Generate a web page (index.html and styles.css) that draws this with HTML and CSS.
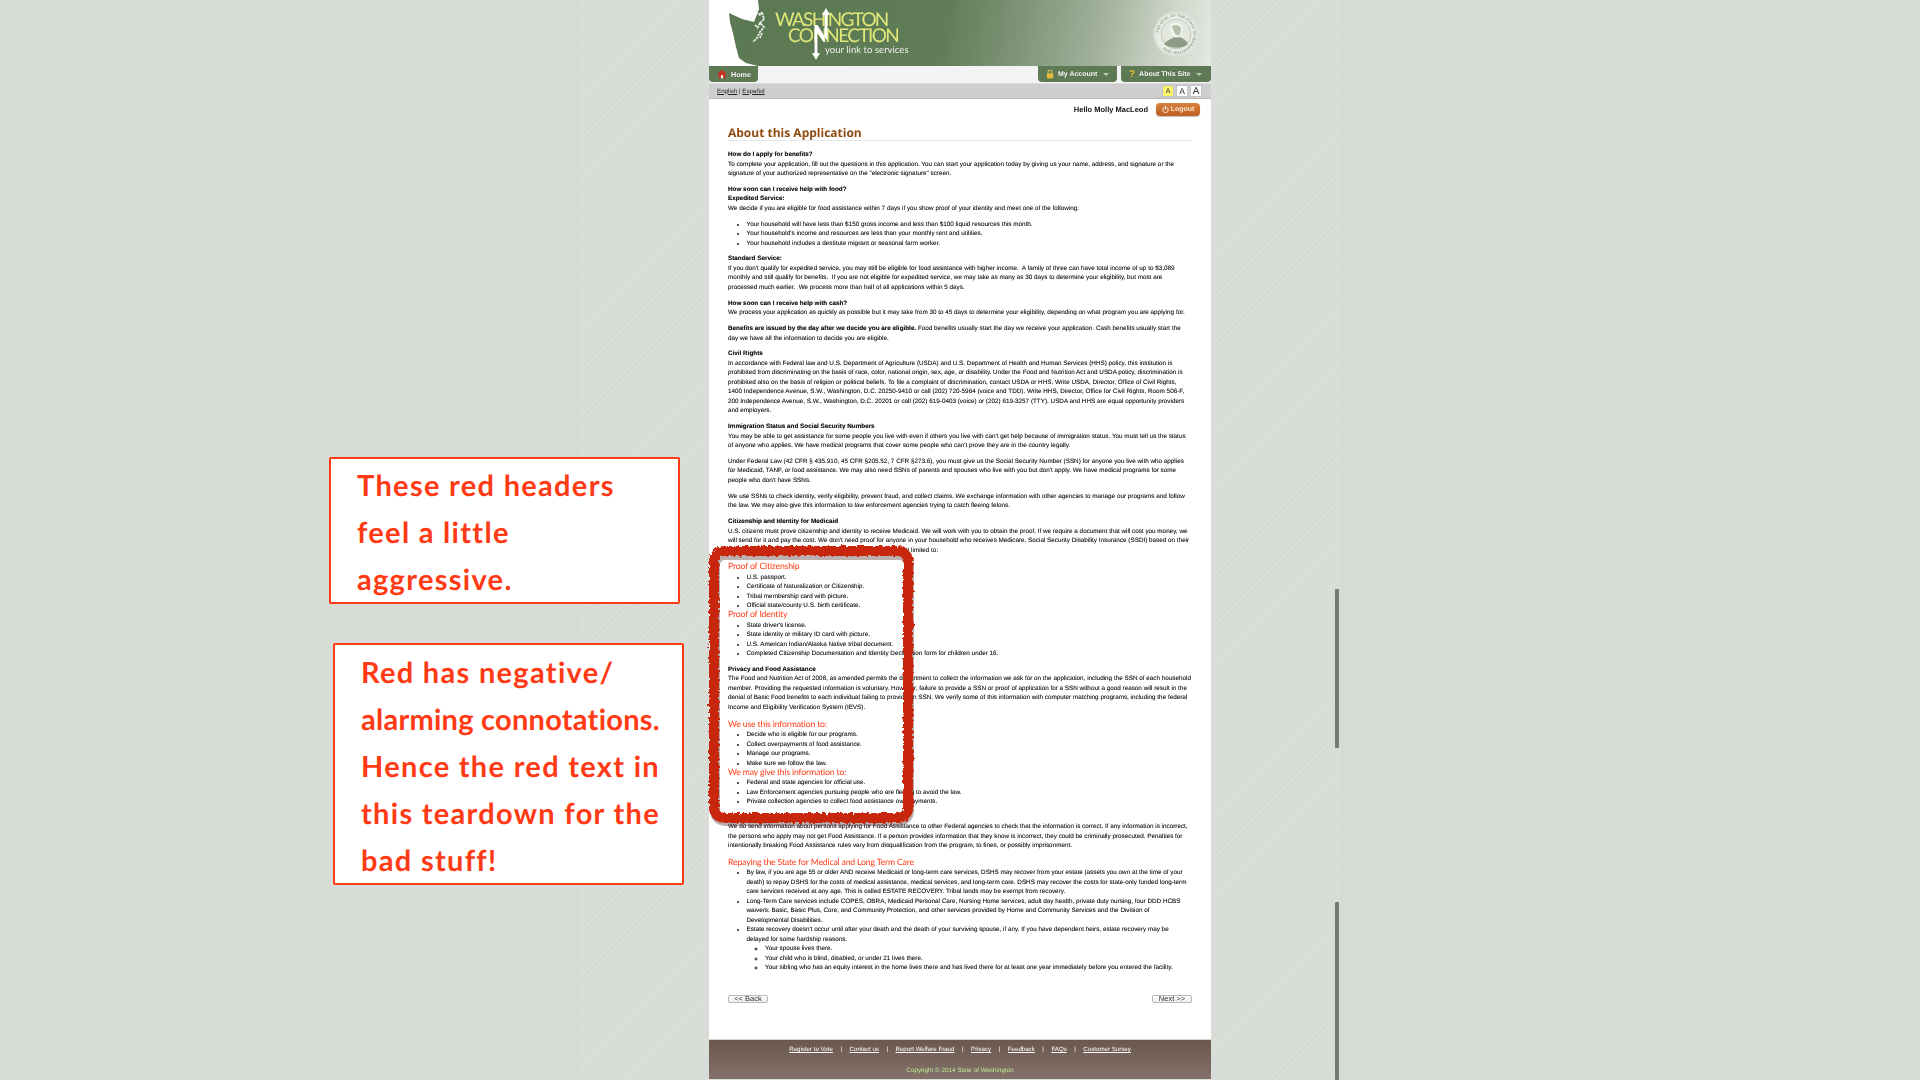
FILE: index.html
```html
<!DOCTYPE html>
<html lang="en">
  <head>
    <meta charset="UTF-8" />
    <meta name="viewport" content="width=device-width, initial-scale=1.0" />
    <title>Washington Connection - About this Application</title>
    <link rel="stylesheet" href="styles.css">
  </head>
  <body>
    <div class="backdrop">
      <div class="page">
        <header class="masthead">
          <svg class="state-map" viewBox="0 0 60 66" width="60" height="66">
            <path d="M0 0H49L50 9L47 17L45 22L33 19L20 13L21 22L24 33L27 47L30 58L37 63L49 66H0Z" fill="#fff" />
            <path d="M47 11L51 15L53 12L55 19L51 23L55 27L51 32L48 38L44 42M51 23L48 29M53 33L51 38M46 25L49 28" fill="none" stroke="#eef1ea" stroke-width="1.7" stroke-dasharray="2.5 .8" />
          </svg>
          <div class="logo">
            <span class="logo-top">WASHINGTON</span>
            <span class="logo-bottom">CONNECTION</span>
            <span class="logo-tag">your link to services</span>
          </div>
          <svg class="logo-arrow" viewBox="0 0 22 52" width="22" height="52">
            <path d="M5 17H7.6L17.4 33V7H20L16 0L12 7H14.6V34H13.6L7.4 24V45H10L6 52L2 45H4.6V17Z" fill="#fff" />
          </svg>
          <svg class="seal" viewBox="0 0 48 48" width="48" height="48">
            <defs>
              <path id="sealRing" d="M24 24m-17.4 0a17.4 17.4 0 1 1 34.8 0a17.4 17.4 0 1 1 -34.8 0" />
            </defs>
            <circle cx="24" cy="24" r="22.5" fill="#e9ece6" />
            <circle cx="24" cy="24" r="21.3" fill="none" stroke="#c3cdbd" stroke-width="0.6" />
            <text class="seal-text"><textPath href="#sealRing" startOffset="1%">THE SEAL OF THE STATE OF WASHINGTON 1889</textPath></text>
            <circle cx="24" cy="24" r="14.8" fill="#e3e7de" stroke="#b3bfab" stroke-width="0.7" />
            <path d="M12 34C15 30 20 29 22 27L27 27C31 28 35 31 36 34C31 39 18 39 12 34Z" fill="#8d9d85" />
            <path d="M18 18C18 12 28 11 30 16C31 20 30 24 28 26C26 28 23 28 21 26C19 24 18 21 18 18Z" fill="#f3f5f0" />
            <path d="M20 16C23 14 27 15 29 18C29 22 28 25 26 26C24 24 22 24 22 21C21 20 20 18 20 16Z" fill="#b4c0ac" />
          </svg>
        </header>

        <nav class="main-nav">
          <a class="nav-tab nav-home">
            <svg class="nav-icon" viewBox="0 0 12 12" width="10" height="10">
              <path d="M6 1L12 6.5H10V11H7.2V7.6H4.8V11H2V6.5H0Z" fill="#c9301f" />
              <path d="M4.8 7.6H7.2V11H4.8Z" fill="#fff" />
            </svg>
            Home
          </a>
          <div class="nav-spacer"></div>
          <a class="nav-tab nav-account">
            <svg class="nav-icon" viewBox="0 0 10 12" width="8" height="10">
              <path d="M2.5 5V3.4C2.5 .6 7.5 .6 7.5 3.4V5" fill="none" stroke="#e3c25a" stroke-width="1.3" />
              <rect x="1" y="5" width="8" height="6.5" rx="1" fill="#e8b93c" />
            </svg>
            My Account
            <span class="caret"></span>
          </a>
          <a class="nav-tab nav-about">
            <span class="nav-help">?</span>
            About This Site
            <span class="caret"></span>
          </a>
        </nav>

        <div class="lang-bar">
          <div class="lang-links"><a>English</a> | <a>Español</a></div>
          <div class="text-sizes">
            <span class="size-btn size-small active">A</span>
            <span class="size-btn size-medium">A</span>
            <span class="size-btn size-large">A</span>
          </div>
        </div>

        <div class="user-row">
          <span class="hello">Hello Molly MacLeod</span>
          <a class="logout-btn">
            <svg viewBox="0 0 10 10" width="7" height="7">
              <path d="M3 2.2A3.9 3.9 0 1 0 7 2.2M5 .6V4.6" fill="none" stroke="#fff" stroke-width="1.4" stroke-linecap="round" />
            </svg>
            Logout
          </a>
        </div>

        <main class="content">
          <h1>About this Application</h1>

          <p><b>How do I apply for benefits?</b><br />
          To complete your application, fill out the questions in this application. You can start your application today by giving us your name, address, and signature or the<br />
          signature of your authorized representative on the "electronic signature" screen.</p>

          <p><b>How soon can I receive help with food?</b><br />
          <b>Expedited Service:</b><br />
          We decide if you are eligible for food assistance within 7 days if you show proof of your identity and meet one of the following:</p>
          <ul class="spaced">
            <li>Your household will have less than $150 gross income and less than $100 liquid resources this month.</li>
            <li>Your household's income and resources are less than your monthly rent and utilities.</li>
            <li>Your household includes a destitute migrant or seasonal farm worker.</li>
          </ul>

          <p><b>Standard Service:</b><br />
          If you don't qualify for expedited service, you may still be eligible for food assistance with higher income.&nbsp; A family of three can have total income of up to $3,089<br />
          monthly and still qualify for benefits.&nbsp; If you are not eligible for expedited service, we may take as many as 30 days to determine your eligibility, but most are<br />
          processed much earlier.&nbsp; We process more than half of all applications within 5 days.</p>

          <p><b>How soon can I receive help with cash?</b><br />
          We process your application as quickly as possible but it may take from 30 to 45 days to determine your eligibility, depending on what program you are applying for.</p>

          <p><b>Benefits are issued by the day after we decide you are eligible.</b> Food benefits usually start the day we receive your application. Cash benefits usually start the<br />
          day we have all the information to decide you are eligible.</p>

          <p><b>Civil Rights</b><br />
          In accordance with Federal law and U.S. Department of Agriculture (USDA) and U.S. Department of Health and Human Services (HHS) policy, this institution is<br />
          prohibited from discriminating on the basis of race, color, national origin, sex, age, or disability. Under the Food and Nutrition Act and USDA policy, discrimination is<br />
          prohibited also on the basis of religion or political beliefs. To file a complaint of discrimination, contact USDA or HHS. Write USDA, Director, Office of Civil Rights,<br />
          1400 Independence Avenue, S.W., Washington, D.C. 20250-9410 or call (202) 720-5964 (voice and TDD). Write HHS, Director, Office for Civil Rights, Room 506-F,<br />
          200 Independence Avenue, S.W., Washington, D.C. 20201 or call (202) 619-0403 (voice) or (202) 619-3257 (TTY). USDA and HHS are equal opportunity providers<br />
          and employers.</p>

          <p><b>Immigration Status and Social Security Numbers</b><br />
          You may be able to get assistance for some people you live with even if others you live with can't get help because of immigration status. You must tell us the status<br />
          of anyone who applies. We have medical programs that cover some people who can't prove they are in the country legally.</p>

          <p>Under Federal Law (42 CFR § 435.910, 45 CFR §205.52, 7 CFR §273.6), you must give us the Social Security Number (SSN) for anyone you live with who applies<br />
          for Medicaid, TANF, or food assistance. We may also need SSNs of parents and spouses who live with you but don't apply. We have medical programs for some<br />
          people who don't have SSNs.</p>

          <p>We use SSNs to check identity, verify eligibility, prevent fraud, and collect claims. We exchange information with other agencies to manage our programs and follow<br />
          the law. We may also give this information to law enforcement agencies trying to catch fleeing felons.</p>

          <p><b>Citizenship and Identity for Medicaid</b><br />
          U.S. citizens must prove citizenship and identity to receive Medicaid. We will work with you to obtain the proof. If we require a document that will cost you money, we<br />
          will send for it and pay the cost. We don't need proof for anyone in your household who receives Medicare, Social Security Disability Insurance (SSDI) based on their<br />
          disability or age. Acceptable proof of citizenship includes but isn't limited to:</p>

          <h2 class="red-first">Proof of Citizenship</h2>
          <ul>
            <li>U.S. passport.</li>
            <li>Certificate of Naturalization or Citizenship.</li>
            <li>Tribal membership card with picture.</li>
            <li>Official state/county U.S. birth certificate.</li>
          </ul>
          <h2>Proof of Identity</h2>
          <ul class="spaced">
            <li>State driver's license.</li>
            <li>State identity or military ID card with picture.</li>
            <li>U.S. American Indian/Alaska Native tribal document.</li>
            <li>Completed Citizenship Documentation and Identity Declaration form for children under 16.</li>
          </ul>

          <p><b>Privacy and Food Assistance</b><br />
          The Food and Nutrition Act of 2008, as amended permits the department to collect the information we ask for on the application, including the SSN of each household<br />
          member. Providing the requested information is voluntary. However, failure to provide a SSN or proof of application for a SSN without a good reason will result in the<br />
          denial of Basic Food benefits to each individual failing to provide an SSN. We verify some of this information with computer matching programs, including the federal<br />
          Income and Eligibility Verification System (IEVS).</p>

          <h2 class="red-first">We use this information to:</h2>
          <ul>
            <li>Decide who is eligible for our programs.</li>
            <li>Collect overpayments of food assistance.</li>
            <li>Manage our programs.</li>
            <li>Make sure we follow the law.</li>
          </ul>
          <h2>We may give this information to:</h2>
          <ul class="spaced wide-gap">
            <li>Federal and state agencies for official use.</li>
            <li>Law Enforcement agencies pursuing people who are fleeing to avoid the law.</li>
            <li>Private collection agencies to collect food assistance overpayments.</li>
          </ul>

          <p>We do send information about persons applying for Food Assistance to other Federal agencies to check that the information is correct. If any information is incorrect,<br />
          the persons who apply may not get Food Assistance. If a person provides information that they know is incorrect, they could be criminally prosecuted. Penalties for<br />
          intentionally breaking Food Assistance rules vary from disqualification from the program, to fines, or possibly imprisonment.</p>

          <h2 class="red-first">Repaying the State for Medical and Long Term Care</h2>
          <ul>
            <li>By law, if you are age 55 or older AND receive Medicaid or long-term care services, DSHS may recover from your estate (assets you own at the time of your<br />
            death) to repay DSHS for the costs of medical assistance, medical services, and long-term care. DSHS may recover the costs for state-only funded long-term<br />
            care services received at any age. This is called ESTATE RECOVERY. Tribal lands may be exempt from recovery.</li>
            <li>Long-Term Care services include COPES, OBRA, Medicaid Personal Care, Nursing Home services, adult day health, private duty nursing, four DDD HCBS<br />
            waivers: Basic, Basic Plus, Core, and Community Protection, and other services provided by Home and Community Services and the Division of<br />
            Developmental Disabilities.</li>
            <li>Estate recovery doesn't occur until after your death and the death of your surviving spouse, if any. If you have dependent heirs, estate recovery may be<br />
            delayed for some hardship reasons.
              <ul>
                <li>Your spouse lives there.</li>
                <li>Your child who is blind, disabled, or under 21 lives there.</li>
                <li>Your sibling who has an equity interest in the home lives there and has lived there for at least one year immediately before you entered the facility.</li>
              </ul>
            </li>
          </ul>

          <div class="pager">
            <button class="pager-btn">&lt;&lt; Back</button>
            <button class="pager-btn">Next &gt;&gt;</button>
          </div>
        </main>

        <footer class="site-footer">
          <div class="footer-links">
            <a>Register to Vote</a><span>|</span>
            <a>Contact us</a><span>|</span>
            <a>Report Welfare Fraud</a><span>|</span>
            <a>Privacy</a><span>|</span>
            <a>Feedback</a><span>|</span>
            <a>FAQs</a><span>|</span>
            <a>Customer Survey</a>
          </div>
          <div class="copyright">Copyright © 2014 State of Washington</div>
        </footer>
      </div>
    </div>

    <svg class="red-frame" viewBox="0 0 212 284" width="212" height="284">
      <defs>
        <filter id="rough" x="-5%" y="-5%" width="110%" height="110%">
          <feTurbulence type="fractalNoise" baseFrequency="0.3" numOctaves="2" seed="4" />
          <feDisplacementMap in="SourceGraphic" scale="5" />
        </filter>
      </defs>
      <rect class="frame-shadow" x="9" y="11" width="194" height="266" rx="10" />
      <rect class="frame-line" x="8" y="7" width="194" height="267" rx="10" filter="url(#rough)" />
    </svg>

    <div class="note note-first">These red headers<br />feel a little<br />aggressive.</div>
    <div class="note note-second">Red has negative/<br /><span class="tight">alarming connotations.</span><br />Hence the red text in<br />this teardown for the<br />bad stuff!</div>

    <div class="scroll-mark scroll-upper"></div>
    <div class="scroll-mark scroll-lower"></div>
  </body>
</html>
```

FILE: styles.css
```css
* {
  margin: 0;
  padding: 0;
  box-sizing: border-box;
}

body {
  position: relative;
  width: 1920px;
  height: 1080px;
  overflow: hidden;
  background: #d6dbd5;
  font-family: "Liberation Sans", Arial, sans-serif;
  text-rendering: geometricPrecision;
}

.backdrop {
  width: 760px;
  height: 1080px;
  margin: 0 auto;
  background: repeating-linear-gradient(
    135deg,
    #d6dbd5 0,
    #d6dbd5 2px,
    #dadfd9 2px,
    #dadfd9 4px
  );
}

.page {
  display: flex;
  flex-direction: column;
  width: 502px;
  height: 1079px;
  margin: 0 auto;
  background: white;
  filter: blur(0.35px);
}

/* header */
.masthead {
  position: relative;
  flex: none;
  height: 66px;
  background: linear-gradient(
    100deg,
    #5a7852 0%,
    #5f7c56 46%,
    #7f9578 62%,
    #a1b19a 77%,
    #cfd6ca 91%,
    #e4e8e1 100%
  );
}

.state-map {
  position: absolute;
  left: 0;
  top: 0;
}

.logo {
  position: absolute;
  left: 66px;
  top: 12px;
  color: #dfe877;
  font-family: Lato, sans-serif;
  font-weight: 400;
}

.logo span {
  display: block;
  white-space: nowrap;
}

.logo-top {
  font-size: 19px;
  line-height: 16px;
  letter-spacing: -1.8px;
}

.logo-bottom {
  font-size: 19px;
  line-height: 16px;
  letter-spacing: -1.6px;
  margin-left: 13px;
}

.logo-tag {
  margin-left: 50px;
  margin-top: 1px;
  font-size: 9.6px;
  line-height: 12px;
  color: #eef1e8;
}

.logo-arrow {
  position: absolute;
  left: 101px;
  top: 8px;
}

.seal {
  position: absolute;
  right: 11px;
  top: 10px;
}

.seal-text {
  font-family: "Liberation Sans", Arial, sans-serif;
  font-size: 3.6px;
  font-weight: 700;
  fill: #8f9f87;
  letter-spacing: 0.2px;
}

/* nav */
.main-nav {
  display: flex;
  flex: none;
  height: 17px;
  background: #f3f3f3;
}

.nav-tab {
  display: flex;
  align-items: center;
  gap: 4px;
  height: 16px;
  background: #5d7a54;
  border-radius: 0 0 4px 4px;
  color: white;
  font-size: 7px;
  font-weight: 700;
  text-shadow: 0 0 1px rgba(0, 0, 0, 0.4);
  white-space: nowrap;
}

.nav-home {
  width: 49px;
  padding-left: 8px;
  gap: 4px;
  font-size: 7.2px;
}

.nav-spacer {
  flex: 1;
}

.nav-account {
  width: 79px;
  padding-left: 8px;
  margin-right: 4px;
}

.nav-about {
  width: 90px;
  padding-left: 8px;
}

.nav-help {
  color: #ecc93a;
  font-size: 10px;
}

.caret {
  width: 0;
  height: 0;
  margin-left: 2px;
  border-left: 3.5px solid transparent;
  border-right: 3.5px solid transparent;
  border-top: 3px solid #bcc7b6;
}

.lang-bar {
  display: flex;
  flex: none;
  align-items: center;
  justify-content: space-between;
  height: 16px;
  padding: 0 9px 0 8px;
  background: #cfcfcf;
  border-top: 1px solid #dcdcdc;
  border-bottom: 1px solid #b5b5b5;
  font-size: 6.2px;
  color: #222;
}

.lang-links a {
  text-decoration: underline;
}

.text-sizes {
  display: flex;
  gap: 2px;
}

.size-btn {
  display: flex;
  align-items: center;
  justify-content: center;
  width: 12px;
  height: 12px;
  background: white;
  border: 1px solid #c2c2c2;
  color: #222;
}

.size-small {
  font-size: 7px;
}

.size-medium {
  font-size: 8.5px;
}

.size-large {
  font-size: 10px;
}

.size-btn.active {
  background: #f8f56f;
}

.user-row {
  display: flex;
  flex: none;
  align-items: center;
  justify-content: flex-end;
  gap: 8px;
  height: 14px;
  margin-top: 3px;
  padding-right: 11px;
}

.hello {
  font-size: 7.5px;
  font-weight: 700;
  color: #111;
}

.logout-btn {
  display: flex;
  align-items: center;
  justify-content: center;
  gap: 2px;
  width: 44px;
  height: 13px;
  border-radius: 4px;
  background: linear-gradient(#d9813f, #bd5e22);
  box-shadow: 0 1px 1px rgba(0, 0, 0, 0.25);
  color: #fbe6d5;
  font-size: 7px;
  font-weight: 700;
}

/* main text */
.content {
  flex: 1;
  padding: 9px 19px 0;
  font-size: 6.33px;
  line-height: 9.52px;
  color: #222;
  text-shadow: 0 0 0.4px rgba(0, 0, 0, 0.45);
  white-space: nowrap;
}

.content h1 {
  height: 16px;
  margin-bottom: 9px;
  border-bottom: 1px solid #e8e8e8;
  font-family: "Open Sans", sans-serif;
  font-size: 12px;
  line-height: 16px;
  font-weight: 700;
  color: #8f4a10;
  text-shadow: none;
}

.content p {
  margin-bottom: 6.25px;
}

.content b {
  color: #111;
}

.content h2 {
  margin-top: -1.3px;
  margin-bottom: 1.75px;
  font-family: Lato, sans-serif;
  font-size: 8.7px;
  line-height: 9.52px;
  letter-spacing: -0.17px;
  font-weight: 400;
  color: #ff3a14;
  text-shadow: none;
}

.content h2.red-first {
  margin-top: 5px;
}

.content ul {
  padding-left: 18.5px;
}

.content ul.spaced {
  margin-bottom: 6.25px;
}

.content p + ul.spaced {
  margin-top: 6.25px;
}

.content ul.wide-gap {
  margin-bottom: 15.5px;
}

.pager {
  display: flex;
  justify-content: space-between;
  margin-top: 22px;
}

.pager-btn {
  width: 40px;
  height: 8px;
  background: linear-gradient(white, #eeeeee);
  border: 1px solid #b8b8b8;
  border-radius: 2px;
  font-family: "Liberation Sans", Arial, sans-serif;
  font-size: 7.5px;
  line-height: 6px;
  color: #333;
}

/* footer */
.site-footer {
  flex: none;
  height: 40px;
  background: linear-gradient(#6a584f, #84716a);
  border-top: 1px solid #d8d4d0;
  text-align: center;
  font-size: 6.15px;
  line-height: 9px;
}

.footer-links {
  display: flex;
  justify-content: center;
  gap: 7.5px;
  margin-top: 5px;
  color: white;
}

.footer-links a {
  text-decoration: underline;
}

.copyright {
  margin-top: 12px;
  font-size: 6.3px;
  color: #bde893;
}

/* annotations */
.red-frame {
  position: absolute;
  left: 706px;
  top: 544px;
}

.frame-line {
  fill: none;
  stroke: #c8260e;
  stroke-width: 10;
}

.frame-shadow {
  fill: none;
  stroke: rgba(60, 30, 20, 0.35);
  stroke-width: 10;
}

.note {
  position: absolute;
  padding-left: 26px;
  width: 351px;
  background: white;
  border: 2.5px solid #ff3a14;
  border-radius: 2px;
  font-family: "Comic Sans MS", Lato, sans-serif;
  font-size: 29px;
  font-weight: 700;
  line-height: 47px;
  letter-spacing: 1.3px;
  color: #ff3a14;
  white-space: nowrap;
}

.tight {
  letter-spacing: 0.25px;
}

.note-first {
  left: 329px;
  top: 457px;
  height: 147px;
  padding-top: 3px;
}

.note-second {
  left: 333px;
  top: 643px;
  height: 242px;
  padding-top: 4px;
}

.scroll-mark {
  position: absolute;
  left: 1335px;
  width: 4px;
  background: #757975;
  border-radius: 1px;
}

.scroll-upper {
  top: 589px;
  height: 159px;
}

.scroll-lower {
  top: 902px;
  height: 178px;
}
```
